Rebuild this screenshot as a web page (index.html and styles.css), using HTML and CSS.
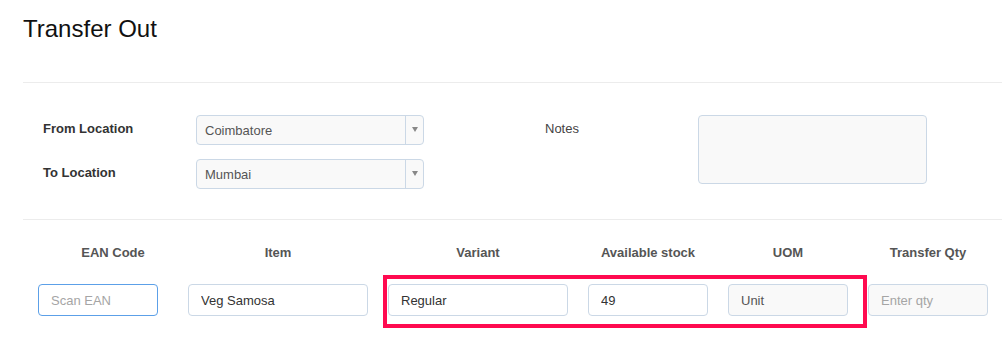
FILE: index.html
```html
<!DOCTYPE html>
<html lang="en">
<head>
<meta charset="utf-8">
<title>Transfer Out</title>
<link rel="stylesheet" href="styles.css">
</head>
<body>
<div class="page">
  <header class="page-header">
    <h1 class="title">Transfer Out</h1>
  </header>

  <section class="form-section">
    <div class="form-grid">
      <label class="field-label label-from">From Location</label>
      <div class="combo combo-from">
        <span class="combo-value">Coimbatore</span>
        <span class="combo-arrow"><span class="tri"></span></span>
      </div>
      <label class="field-label label-to">To Location</label>
      <div class="combo combo-to">
        <span class="combo-value">Mumbai</span>
        <span class="combo-arrow"><span class="tri"></span></span>
      </div>
      <label class="notes-label">Notes</label>
      <textarea class="notes"></textarea>
    </div>
  </section>

  <section class="items-section">
    <div class="items-grid">
      <div class="col-head col-head-first">EAN Code</div>
      <div class="col-head">Item</div>
      <div class="col-head">Variant</div>
      <div class="col-head">Available stock</div>
      <div class="col-head">UOM</div>
      <div class="col-head">Transfer Qty</div>

      <input class="cell-input input-ean" type="text" placeholder="Scan EAN">
      <input class="cell-input input-wide" type="text" value="Veg Samosa">
      <input class="cell-input input-wide" type="text" value="Regular">
      <input class="cell-input" type="text" value="49">
      <input class="cell-input input-readonly" type="text" value="Unit" readonly>
      <input class="cell-input input-readonly" type="text" placeholder="Enter qty">

      <div class="highlight"></div>
    </div>
  </section>
</div>
</body>
</html>
```

FILE: styles.css
```css
* {
  box-sizing: border-box;
}

html, body {
  margin: 0;
  padding: 0;
  background: #fff;
}

body {
  font-family: "Liberation Sans", Arial, sans-serif;
  color: #333;
  font-size: 13px;
}

.page {
  padding-left: 23px;
  overflow-x: hidden;
}

.page-header {
  padding-top: 16px;
  border-bottom: 1px solid #ececec;
  padding-bottom: 41px;
}

.title {
  margin: 0;
  font-size: 24px;
  line-height: 25px;
  font-weight: normal;
  color: #111;
}

.form-section {
  padding: 32px 0 30px 20px;
  border-bottom: 1px solid #ececec;
}

.form-grid {
  display: grid;
  grid-template-columns: 153px 228px 121px 153px 229px;
  grid-template-rows: 30px 30px;
  row-gap: 14px;
}

.field-label {
  font-weight: bold;
  font-size: 13px;
  line-height: 18px;
  color: #333;
  align-self: center;
  margin-top: -2px;
}

.label-from { grid-column: 1; grid-row: 1; }
.combo-from { grid-column: 2; grid-row: 1; }
.label-to { grid-column: 1; grid-row: 2; }
.combo-to { grid-column: 2; grid-row: 2; }

.notes-label {
  grid-column: 4;
  grid-row: 1;
  align-self: center;
  margin-top: -2px;
  line-height: 18px;
  color: #444;
}

.notes {
  grid-column: 5;
  grid-row: 1 / span 2;
  align-self: start;
  height: 69px;
  width: 229px;
  margin: 0;
  resize: none;
  background: #f9f9f9;
  border: 1px solid #cbd8e6;
  border-radius: 4px;
  font-family: inherit;
}

.combo {
  display: flex;
  align-items: stretch;
  background: #f9f9f9;
  border: 1px solid #cbd8e6;
  border-radius: 4px;
}

.combo-value {
  flex: 1;
  display: flex;
  align-items: center;
  padding-left: 8px;
  color: #555;
  font-size: 13px;
}

.combo-arrow {
  width: 18px;
  border-left: 1px solid #cbd8e6;
  display: flex;
  align-items: center;
  justify-content: center;
}

.tri {
  width: 0;
  height: 0;
  border-left: 3px solid transparent;
  border-right: 3px solid transparent;
  border-top: 5px solid #888;
  margin-top: -2px;
}

.items-section {
  padding: 24px 0 35px 15px;
}

.items-grid {
  position: relative;
  display: grid;
  grid-template-columns: 130px 180px 180px 120px 120px 120px;
  column-gap: 20px;
  row-gap: 22px;
}

.col-head {
  text-align: center;
  font-weight: bold;
  font-size: 13px;
  line-height: 18px;
  color: #555;
}

.col-head-first {
  padding-left: 20px;
}

.cell-input {
  height: 32px;
  width: 120px;
  margin: 0;
  padding: 0 12px;
  border: 1px solid #cbd8e6;
  border-radius: 4px;
  background: #fff;
  font-family: inherit;
  font-size: 13px;
  color: #333;
  outline: none;
}

.cell-input::placeholder {
  color: #a5a5a5;
}

.input-ean {
  border-color: #5ca0e8;
}

.input-wide {
  width: 180px;
}

.input-readonly {
  background: #f9f9f9;
  color: #555;
}

.highlight {
  position: absolute;
  left: 345px;
  top: 31px;
  width: 484px;
  height: 53px;
  border: 4px solid #ff0a50;
  pointer-events: none;
}
```
